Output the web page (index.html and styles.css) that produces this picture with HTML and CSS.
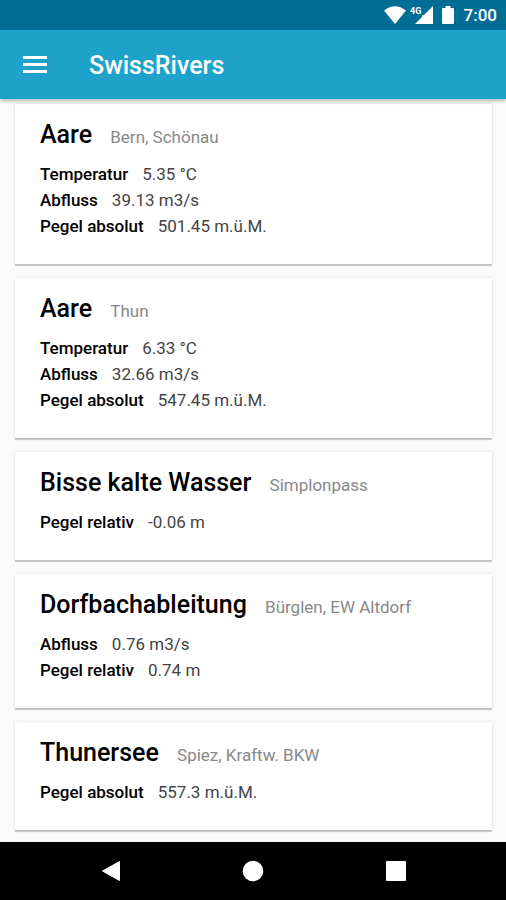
FILE: index.html
```html
<!DOCTYPE html>
<html lang="de">
<head>
<meta charset="utf-8">
<meta name="viewport" content="width=device-width, initial-scale=1">
<title>SwissRivers</title>
<link rel="stylesheet" href="styles.css">
</head>
<body>
<div class="statusbar">
  <svg width="22" height="18" viewBox="0 0 22 18" aria-hidden="true"><path fill="#fff" d="M0 4.500Q11-4 22 4.500L11 18z"/></svg>
  <svg class="signal" width="24" height="18" viewBox="0 0 24 18" aria-hidden="true"><path fill="#fff" d="M23 0v18H5l7-7V9.500l2-.5z"/><text class="network" x="0" y="8">4G</text></svg>
  <svg class="battery" width="12" height="18" viewBox="0 0 12 18" aria-hidden="true"><path fill="#fff" d="M3.500 0h5v2H11q1 0 1 1v14q0 1-1 1H1q-1 0-1-1V3q0-1 1-1h2.500z"/></svg>
  <span>7:00</span>
</div>
<header class="appbar">
  <button class="menu" type="button" aria-label="Menü"><svg width="24" height="18" viewBox="0 0 24 18"><path fill="#fff" d="M0 0h24v3H0zM0 7h24v3H0zM0 14h24v3H0z"/></svg></button>
  <h1>SwissRivers</h1>
</header>
<main class="list">
  <article class="card"><h2>Aare <small>Bern, Schönau</small></h2>
    <dl><div><dt>Temperatur</dt><dd>5.35 °C</dd></div><div><dt>Abfluss</dt><dd>39.13 m3/s</dd></div><div><dt>Pegel absolut</dt><dd>501.45 m.ü.M.</dd></div></dl></article>
  <article class="card"><h2>Aare <small>Thun</small></h2>
    <dl><div><dt>Temperatur</dt><dd>6.33 °C</dd></div><div><dt>Abfluss</dt><dd>32.66 m3/s</dd></div><div><dt>Pegel absolut</dt><dd>547.45 m.ü.M.</dd></div></dl></article>
  <article class="card"><h2>Bisse kalte Wasser <small>Simplonpass</small></h2>
    <dl><div><dt>Pegel relativ</dt><dd>-0.06 m</dd></div></dl></article>
  <article class="card"><h2>Dorfbachableitung <small>Bürglen, EW Altdorf</small></h2>
    <dl><div><dt>Abfluss</dt><dd>0.76 m3/s</dd></div><div><dt>Pegel relativ</dt><dd>0.74 m</dd></div></dl></article>
  <article class="card"><h2>Thunersee <small>Spiez, Kraftw. BKW</small></h2>
    <dl><div><dt>Pegel absolut</dt><dd>557.3 m.ü.M.</dd></div></dl></article>
</main>
<nav class="navbar" aria-label="System">
  <button type="button" aria-label="Zurück"><svg width="22" height="22" viewBox="0 0 22 22"><path fill="#fff" stroke="#fff" stroke-linejoin="round" d="M20.500 1.500v19L3.500 11z"/></svg></button>
  <button type="button" aria-label="Startseite"><svg width="22" height="22" viewBox="0 0 22 22"><circle cx="11" cy="11" r="10.300" fill="#fff"/></svg></button>
  <button type="button" aria-label="Übersicht"><svg width="22" height="22" viewBox="0 0 22 22"><rect x="1" y="1" width="20" height="20" rx="1" fill="#fff"/></svg></button>
</nav>
</body>
</html>
```
FILE: styles.css
```css
* { box-sizing: border-box; }
body {
  margin: 0;
  min-height: 100vh;
  display: flex;
  flex-direction: column;
  background: #fafafa;
  color: #000;
  font-family: Roboto, sans-serif;
}
button { padding: 0; border: 0; background: none; }
svg { display: block; }
.statusbar {
  height: 30px;
  padding: 0 9px;
  display: flex;
  align-items: center;
  justify-content: flex-end;
  background: #006d95;
  color: #fff;
  font-size: 17px;
  font-weight: 500;
}
.signal { margin-left: 4px; }
.battery { margin: 0 10px 0 8px; }
.network { fill: #fff; font-size: 9px; font-weight: 700; }
.appbar {
  position: relative;
  height: 69px;
  padding: 0 23px;
  display: flex;
  align-items: center;
  gap: 42px;
  background: #1ea2ca;
  box-shadow: 0 2px 4px #0004;
}
h1 { margin: 0; padding-top: 2px; color: #fff; font-size: 25px; font-weight: 500; }
.list {
  flex: 1;
  padding: 5px 14px 12px 15px;
  display: flex;
  flex-direction: column;
  gap: 14px;
}
.card {
  padding: 16px 25px 25px;
  background: #fff;
  border-radius: 1px;
  box-shadow: 0 2px 1px #0003, 0 0 3px #0002;
}
h2 { margin: 0 0 11px; font-size: 25px; line-height: 30px; font-weight: 500; }
small { margin-left: 12px; color: #888; font-size: 17px; line-height: 1; font-weight: 400; }
dl { margin: 0; font-size: 17px; line-height: 26px; }
dl div { display: flex; gap: 14px; }
dt { font-weight: 500; }
dd { margin: 0; color: #444; font-weight: 400; }
.navbar {
  height: 58px;
  padding: 0 39px;
  display: flex;
  background: #000;
}
.navbar button { flex: 1; display: grid; place-items: center; }
```
